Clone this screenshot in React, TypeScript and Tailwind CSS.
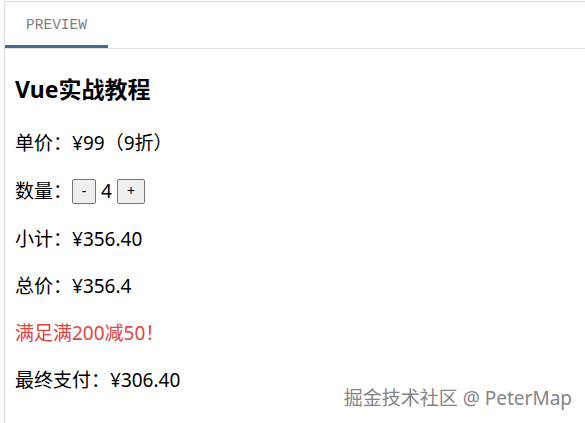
import React from "react";

const cjk = { fontFamily: '"Noto Sans", "Noto Sans CJK SC", sans-serif' };

function Counter({ count }: { count: number }) {
  return (
    <span className="inline-flex items-center gap-[5px]">
      <button className="w-[24px] h-[25px] bg-[#efefef] border border-[#767676] rounded-[2px] text-[14px] leading-none text-black">
        -
      </button>
      <span>{count}</span>
      <button className="w-[28px] h-[25px] bg-[#efefef] border border-[#767676] rounded-[2px] text-[14px] leading-none text-black">
        +
      </button>
    </span>
  );
}

export default function App() {
  const price = 99;
  const count = 4;
  const subtotal = price * 0.9 * count;

  return (
    <div className="relative w-[585px] h-[423px] bg-white overflow-hidden" style={cjk}>
      <div className="ml-[4px] mt-[1px] h-[422px] border-l border-t border-[#dddddd]">
        {/* Tabs */}
        <div className="h-[47px] flex items-end border-b border-[#e2e2e2]">
          <div
            className="w-[103px] h-[46px] flex items-center justify-center border-b-[3px] border-[#46698f] text-[14.5px] text-[#808080] pt-[4px]"
            style={{ fontFamily: '"Liberation Mono", monospace' }}
          >
            PREVIEW
          </div>
        </div>

        {/* Preview */}
        <div className="pl-[10px] pt-[26px] text-[19px] leading-[26px] text-black">
          <h3 className="text-[23px] font-bold leading-[28px] mb-[27px]">Vue实战教程</h3>
          <div className="flex flex-col gap-[21px]">
            <p>单价：¥{price}（9折）</p>
            <p className="flex items-center h-[28px]">
              数量：<Counter count={count} />
            </p>
            <p>小计：¥{subtotal.toFixed(2)}</p>
            <p>总价：¥{Number(subtotal.toFixed(2))}</p>
            <p className="text-[#e0463e]">满足满200减50！</p>
            <p>最终支付：¥{(subtotal - 50).toFixed(2)}</p>
          </div>
        </div>
      </div>

      {/* watermark */}
      <div
        className="absolute right-[13px] bottom-[11px] text-[19px] text-[#858585]"
        style={{ textShadow: "0 0 2px #fff, 1px 1px 0 #fff" }}
      >
        掘金技术社区 @ PeterMap
      </div>
    </div>
  );
}
